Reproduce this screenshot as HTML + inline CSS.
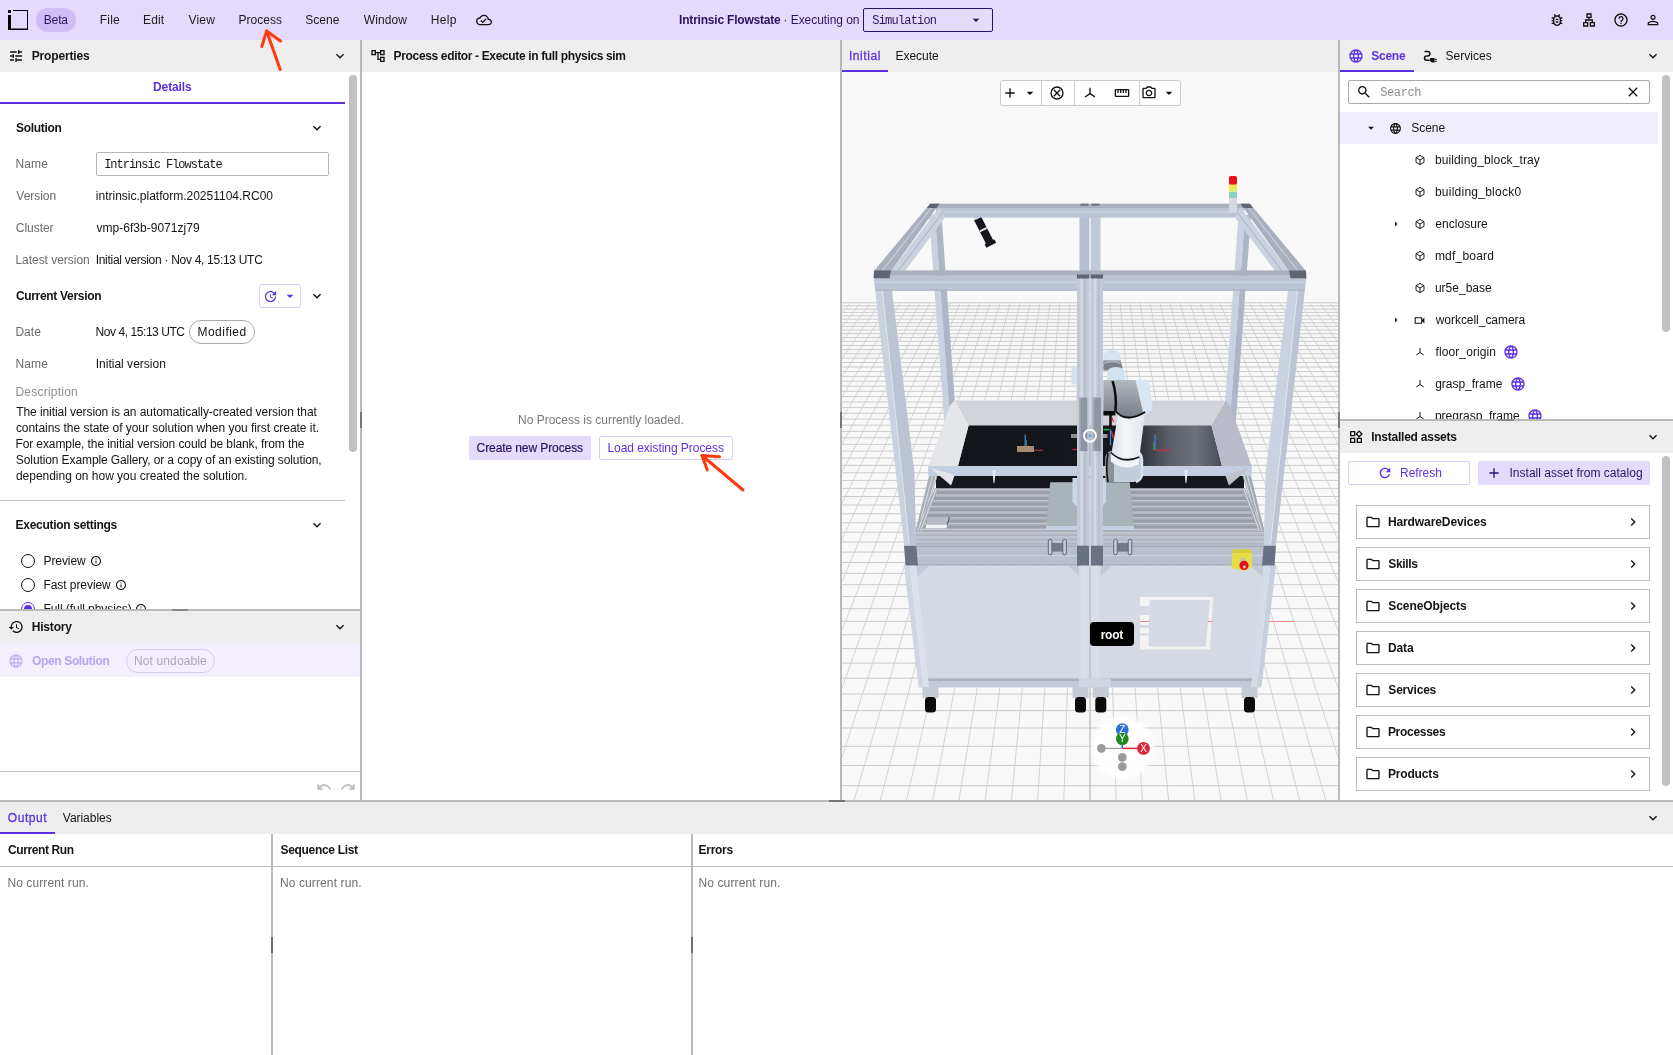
<!DOCTYPE html>
<html lang="en"><head><meta charset="utf-8"><title>Intrinsic Flowstate</title><style>html,body{margin:0;padding:0}
body{width:1673px;height:1055px;position:relative;overflow:hidden;background:#fff;font-family:"Liberation Sans",sans-serif;font-size:12px;color:#141414}
.a{position:absolute}
.t{position:absolute;white-space:nowrap;line-height:16px}
svg{display:block;overflow:visible}
#app{position:absolute;left:0;top:0;width:1673px;height:1055px;will-change:transform}</style></head><body><div id="app">
<div class="a" style="left:0px;top:0px;width:1673px;height:40px;background:#e4dafb"></div>
<div class="a" style="left:0px;top:40px;width:1673px;height:32px;background:#eeeeee"></div>
<div class="a" style="left:360px;top:40px;width:2px;height:760px;background:#b9b9b9"></div>
<div class="a" style="left:840px;top:40px;width:2px;height:760px;background:#b9b9b9"></div>
<div class="a" style="left:1338px;top:40px;width:2px;height:760px;background:#b9b9b9"></div>
<div class="a" style="left:0px;top:800px;width:1673px;height:2px;background:#b9b9b9"></div>
<div class="a" style="left:360px;top:412px;width:2px;height:16px;background:#777"></div>
<div class="a" style="left:840px;top:412px;width:2px;height:16px;background:#777"></div>
<div class="a" style="left:1338px;top:412px;width:2px;height:16px;background:#777"></div>
<svg class="a" style="left:8px;top:10px" width="21" height="21" viewBox="0 0 21 21"><rect x="0" y="0" width="3" height="3" fill="#000"/><path d="M0 5h3v13.500h16V1H5V0h15v20H0z" fill="#000"/></svg>
<div class="a" style="left:36px;top:8px;width:40px;height:24px;background:#cfbef6;border-radius:12px"></div>
<div class="t" style="left:43.70px;top:12.0px;letter-spacing:-0.117px;color:#2a1363;">Beta</div>
<div class="t" style="left:99.70px;top:12.0px;letter-spacing:0.233px;color:#1c1c1c;">File</div>
<div class="t" style="left:143.00px;top:12.0px;letter-spacing:0.167px;color:#1c1c1c;">Edit</div>
<div class="t" style="left:188.55px;top:12.0px;letter-spacing:0.167px;color:#1c1c1c;">View</div>
<div class="t" style="left:238.40px;top:12.0px;letter-spacing:0.033px;color:#1c1c1c;">Process</div>
<div class="t" style="left:305.15px;top:12.0px;letter-spacing:0.088px;color:#1c1c1c;">Scene</div>
<div class="t" style="left:363.75px;top:12.0px;letter-spacing:0.110px;color:#1c1c1c;">Window</div>
<div class="t" style="left:430.80px;top:12.0px;letter-spacing:0.350px;color:#1c1c1c;">Help</div>
<svg class="a" style="left:476.00px;top:12.00px;" width="16" height="16" viewBox="0 0 24 24"><path d="M19.35 10.04C18.67 6.59 15.64 4 12 4 9.11 4 6.6 5.64 5.35 8.04 2.34 8.36 0 10.91 0 14c0 3.31 2.69 6 6 6h13c2.76 0 5-2.24 5-5 0-2.64-2.05-4.78-4.65-4.96zM19 18H6c-2.21 0-4-1.79-4-4 0-2.05 1.53-3.76 3.56-3.97l1.07-.11.5-.95C8.08 7.14 9.94 6 12 6c2.62 0 4.88 1.86 5.39 4.43l.3 1.5 1.53.11c1.56.1 2.78 1.41 2.78 2.96 0 1.65-1.35 3-3 3zm-9-3.82l-2.09-2.09L6.5 13.5 10 17l6.01-6.01-1.41-1.41z" fill="#111"/></svg>
<div class="t" style="left:679.10px;top:12.0px;letter-spacing:-0.208px;font-weight:700;color:#2a1363;">Intrinsic Flowstate</div>
<div class="t" style="left:783.50px;top:12.0px;letter-spacing:-0.058px;color:#2a1363;">· Executing on</div>
<div class="a" style="left:863px;top:8px;width:130px;height:24px;border:1px solid #2a1363;border-radius:2px;box-sizing:border-box"></div>
<div class="t" style="left:872.30px;top:13.0px;letter-spacing:-0.806px;font-family:'Liberation Mono',monospace;color:#2a1363;">Simulation</div>
<svg class="a" style="left:968.30px;top:12.30px;" width="16" height="16" viewBox="0 0 24 24"><path d="M7 10l5 5 5-5z" fill="#2a1363"/></svg>
<svg class="a" style="left:1549.00px;top:12.00px;" width="16" height="16" viewBox="0 0 24 24"><path d="M20 8h-2.81c-.45-.78-1.07-1.45-1.82-1.96L17 4.41 15.59 3l-2.17 2.17C12.96 5.06 12.49 5 12 5s-.96.06-1.41.17L8.41 3 7 4.41l1.62 1.63C7.88 6.55 7.26 7.22 6.81 8H4v2h2.09c-.05.33-.09.66-.09 1v1H4v2h2v1c0 .34.04.67.09 1H4v2h2.81c1.04 1.79 2.97 3 5.19 3s4.15-1.21 5.19-3H20v-2h-2.09c.05-.33.09-.66.09-1v-1h2v-2h-2v-1c0-.34-.04-.67-.09-1H20V8zm-4 4v3c0 .22-.03.47-.07.7l-.1.65-.37.65c-.72 1.24-2.04 2-3.46 2s-2.74-.77-3.46-2l-.37-.64-.1-.65C8.03 15.48 8 15.23 8 15v-4c0-.23.03-.48.07-.7l.1-.65.37-.65c.3-.52.72-.97 1.21-1.31l.57-.39.74-.18c.31-.08.63-.12.94-.12.32 0 .63.04.95.12l.68.16.61.42c.5.34.91.78 1.21 1.31l.38.65.1.65c.04.22.07.47.07.69v1zm-6 2h4v2h-4zm0-4h4v2h-4z" fill="#111"/></svg>
<svg class="a" style="left:1581.00px;top:12.00px;" width="16" height="16" viewBox="0 0 24 24"><path d="M13 22h8v-7h-3v-4h-5V9h3V2H8v7h3v2H6v4H3v7h8v-7H8v-2h8v2h-3v7zM10 7V4h4v3h-4zM9 17v3H5v-3h4zm10 0v3h-4v-3h4z" fill="#111"/></svg>
<svg class="a" style="left:1613.00px;top:12.00px;" width="16" height="16" viewBox="0 0 24 24"><path d="M11 18h2v-2h-2v2zm1-16C6.48 2 2 6.48 2 12s4.48 10 10 10 10-4.48 10-10S17.52 2 12 2zm0 18c-4.41 0-8-3.59-8-8s3.59-8 8-8 8 3.59 8 8-3.59 8-8 8zm0-14c-2.21 0-4 1.79-4 4h2c0-1.1.9-2 2-2s2 .9 2 2c0 2-3 1.75-3 5h2c0-2.25 3-2.5 3-5 0-2.21-1.79-4-4-4z" fill="#111"/></svg>
<svg class="a" style="left:1645.00px;top:12.00px;" width="16" height="16" viewBox="0 0 24 24"><path d="M12 5.9c1.16 0 2.1.94 2.1 2.1s-.94 2.1-2.1 2.1S9.9 9.16 9.9 8s.94-2.1 2.1-2.1m0 9c2.97 0 6.1 1.46 6.1 2.1v1.1H5.9V17c0-.64 3.13-2.1 6.1-2.1M12 4C9.79 4 8 5.79 8 8s1.79 4 4 4 4-1.79 4-4-1.79-4-4-4zm0 9c-2.67 0-8 1.34-8 4v3h16v-3c0-2.66-5.33-4-8-4z" fill="#111"/></svg>
<svg class="a" style="left:8.00px;top:48.00px;" width="16" height="16" viewBox="0 0 24 24"><path d="M3 17v2h6v-2H3zM3 5v2h10V5H3zm10 16v-2h8v-2h-8v-2h-2v6h2zM7 9v2H3v2h4v2h2V9H7zm14 4v-2H11v2h10zm-6-4h2V7h4V5h-4V3h-2v6z" fill="#111"/></svg>
<div class="t" style="left:31.70px;top:48.0px;letter-spacing:-0.144px;font-weight:700;">Properties</div>
<svg class="a" style="left:332.00px;top:48.00px;" width="16" height="16" viewBox="0 0 24 24"><path d="M16.59 8.59L12 13.17 7.41 8.59 6 10l6 6 6-6z" fill="#111"/></svg>
<svg class="a" style="left:370.00px;top:48.00px;" width="16" height="16" viewBox="0 0 24 24"><path d="M22 11V3h-7v3H9V3H2v8h7V8h2v10h4v3h7v-8h-7v3h-2V8h2v3h7zM7 9H4V5h3v4zm10 6h3v4h-3v-4zm0-10h3v4h-3V5z" fill="#111"/></svg>
<div class="t" style="left:393.60px;top:48.0px;letter-spacing:-0.349px;font-weight:700;">Process editor - Execute in full physics sim</div>
<div class="t" style="left:848.90px;top:47.5px;letter-spacing:0.600px;color:#5c30e0;-webkit-text-stroke:0.300px #5c30e0;">Initial</div>
<div class="a" style="left:842px;top:70px;width:46px;height:2px;background:#5c30e0"></div>
<div class="t" style="left:895.40px;top:48.0px;letter-spacing:-0.008px;">Execute</div>
<svg class="a" style="left:1347.50px;top:47.50px;" width="16" height="16" viewBox="0 0 24 24"><path d="M11.99 2C6.47 2 2 6.48 2 12s4.47 10 9.99 10C17.52 22 22 17.52 22 12S17.52 2 11.99 2zm6.93 6h-2.95c-.32-1.25-.78-2.45-1.38-3.56 1.84.63 3.37 1.91 4.33 3.56zM12 4.04c.83 1.2 1.48 2.53 1.91 3.96h-3.82c.43-1.43 1.08-2.76 1.91-3.96zM4.26 14C4.1 13.36 4 12.69 4 12s.1-1.36.26-2h3.38c-.08.66-.14 1.32-.14 2 0 .68.06 1.34.14 2H4.26zm.82 2h2.95c.32 1.25.78 2.45 1.38 3.56-1.84-.63-3.37-1.9-4.33-3.56zm2.95-8H5.08c.96-1.66 2.49-2.93 4.33-3.56C8.81 5.55 8.35 6.75 8.03 8zM12 19.96c-.83-1.2-1.48-2.53-1.91-3.96h3.82c-.43 1.43-1.08 2.76-1.91 3.96zM14.34 14H9.66c-.09-.66-.16-1.32-.16-2 0-.68.07-1.35.16-2h4.68c.09.65.16 1.32.16 2 0 .68-.07 1.34-.16 2zm.25 5.56c.6-1.11 1.06-2.31 1.38-3.56h2.95c-.96 1.65-2.49 2.93-4.33 3.56zM16.36 14c.08-.66.14-1.32.14-2 0-.68-.06-1.34-.14-2h3.38c.16.64.26 1.31.26 2s-.1 1.36-.26 2h-3.38z" fill="#5c30e0"/></svg>
<div class="t" style="left:1371.35px;top:47.5px;letter-spacing:-0.275px;font-weight:700;color:#5c30e0;">Scene</div>
<div class="a" style="left:1340px;top:70px;width:73.5px;height:2px;background:#5c30e0"></div>
<svg class="a" style="left:1422px;top:48px" width="16" height="16" viewBox="0 0 16 16"><path d="M2.500 3.500h3.200a2.200 2.200 0 0 1 0 4.400h-1a2.200 2.200 0 0 0 0 4.400h3" fill="none" stroke="#111" stroke-width="1.500"/><path d="M8 10h4.500v4.500H10.500a2.500 2.500 0 0 1-2.500-2.250z" fill="#111"/><rect x="12.500" y="10.800" width="2.300" height="1.100" fill="#111"/><rect x="12.500" y="12.800" width="2.300" height="1.100" fill="#111"/></svg>
<div class="t" style="left:1445.45px;top:48.0px;letter-spacing:0.029px;">Services</div>
<svg class="a" style="left:1645.00px;top:48.00px;" width="16" height="16" viewBox="0 0 24 24"><path d="M16.59 8.59L12 13.17 7.41 8.59 6 10l6 6 6-6z" fill="#111"/></svg>
<div class="t" style="left:153.00px;top:79.0px;letter-spacing:-0.100px;font-weight:700;color:#5c30e0;">Details</div>
<div class="a" style="left:0px;top:102px;width:345px;height:2px;background:#5c30e0"></div>
<div class="a" style="left:349px;top:75px;width:8px;height:377px;background:#c1c1c1;border-radius:4px"></div>
<div class="t" style="left:16.05px;top:120.0px;letter-spacing:-0.329px;font-weight:700;">Solution</div>
<svg class="a" style="left:309.00px;top:120.00px;" width="16" height="16" viewBox="0 0 24 24"><path d="M16.59 8.59L12 13.17 7.41 8.59 6 10l6 6 6-6z" fill="#111"/></svg>
<div class="t" style="left:15.40px;top:156.0px;letter-spacing:0.133px;color:#6a6a6a;">Name</div>
<div class="t" style="left:16.35px;top:188.0px;letter-spacing:-0.033px;color:#6a6a6a;">Version</div>
<div class="t" style="left:15.80px;top:220.0px;letter-spacing:-0.033px;color:#6a6a6a;">Cluster</div>
<div class="t" style="left:15.40px;top:252.0px;letter-spacing:-0.027px;color:#6a6a6a;">Latest version</div>
<div class="a" style="left:96px;top:152px;width:233px;height:24px;border:1px solid #b5b5b5;border-radius:2px;box-sizing:border-box;background:#fff"></div>
<div class="t" style="left:104.20px;top:157.0px;letter-spacing:-1.019px;font-family:'Liberation Mono',monospace;">Intrinsic Flowstate</div>
<div class="t" style="left:95.80px;top:188.0px;">intrinsic.platform.20251104.RC00</div>
<div class="t" style="left:96.55px;top:220.0px;letter-spacing:0.019px;">vmp-6f3b-9071zj79</div>
<div class="t" style="left:95.70px;top:252.0px;letter-spacing:-0.291px;">Initial version · Nov 4, 15:13 UTC</div>
<div class="t" style="left:15.90px;top:288.0px;letter-spacing:-0.314px;font-weight:700;">Current Version</div>
<div class="a" style="left:259px;top:284px;width:42px;height:24px;border:1px solid #d6cbf7;border-radius:2px;box-sizing:border-box"></div>
<svg class="a" style="left:262.50px;top:288.50px;" width="15" height="15" viewBox="0 0 24 24"><path d="M21 10.12h-6.78l2.74-2.82c-2.73-2.7-7.15-2.8-9.88-.1-2.73 2.71-2.73 7.08 0 9.79s7.15 2.71 9.88 0C18.32 15.65 19 14.08 19 12.1h2c0 1.98-.88 4.55-2.64 6.29-3.51 3.48-9.21 3.48-12.72 0-3.5-3.47-3.53-9.11-.02-12.58s9.14-3.47 12.65 0L21 3v7.12zM12.5 8v4.25l3.5 2.08-.72 1.21L11 13V8h1.5z" fill="#5c30e0"/></svg>
<svg class="a" style="left:281.70px;top:288.30px;" width="16" height="16" viewBox="0 0 24 24"><path d="M7 10l5 5 5-5z" fill="#5c30e0"/></svg>
<svg class="a" style="left:309.00px;top:288.00px;" width="16" height="16" viewBox="0 0 24 24"><path d="M16.59 8.59L12 13.17 7.41 8.59 6 10l6 6 6-6z" fill="#111"/></svg>
<div class="t" style="left:15.40px;top:324.0px;letter-spacing:0.050px;color:#6a6a6a;">Date</div>
<div class="t" style="left:95.60px;top:324.0px;letter-spacing:-0.440px;">Nov 4, 15:13 UTC</div>
<div class="a" style="left:189px;top:320px;width:66px;height:24px;border:1px solid #a9a9a9;border-radius:12px;box-sizing:border-box"></div>
<div class="t" style="left:197.50px;top:324.0px;letter-spacing:0.471px;">Modified</div>
<div class="t" style="left:15.40px;top:356.0px;letter-spacing:0.133px;color:#6a6a6a;">Name</div>
<div class="t" style="left:95.70px;top:356.0px;letter-spacing:0.011px;">Initial version</div>
<div class="t" style="left:15.40px;top:384.0px;letter-spacing:0.235px;color:#8c8c8c;">Description</div>
<div class="t" style="left:16.15px;top:404.0px;letter-spacing:-0.069px;">The initial version is an automatically-created version that</div>
<div class="t" style="left:15.90px;top:420.0px;letter-spacing:-0.039px;">contains the state of your solution when you first create it.</div>
<div class="t" style="left:15.40px;top:436.0px;letter-spacing:-0.092px;">For example, the initial version could be blank, from the</div>
<div class="t" style="left:15.85px;top:452.0px;letter-spacing:-0.103px;">Solution Example Gallery, or a copy of an existing solution,</div>
<div class="t" style="left:15.90px;top:468.0px;letter-spacing:-0.012px;">depending on how you created the solution.</div>
<div class="a" style="left:0px;top:500px;width:345px;height:1px;background:#bdbdbd"></div>
<div class="t" style="left:15.60px;top:517.0px;letter-spacing:-0.300px;font-weight:700;">Execution settings</div>
<svg class="a" style="left:309.00px;top:517.00px;" width="16" height="16" viewBox="0 0 24 24"><path d="M16.59 8.59L12 13.17 7.41 8.59 6 10l6 6 6-6z" fill="#111"/></svg>
<div class="a" style="left:21px;top:554px;width:14px;height:14px;border:1px solid #111;border-radius:50%;box-sizing:border-box"></div>
<div class="a" style="left:21px;top:578px;width:14px;height:14px;border:1px solid #111;border-radius:50%;box-sizing:border-box"></div>
<div class="t" style="left:43.50px;top:553.0px;letter-spacing:-0.083px;">Preview</div>
<svg class="a" style="left:90.20px;top:555.00px;" width="12" height="12" viewBox="0 0 24 24"><path d="M11 7h2v2h-2zm0 4h2v6h-2zm1-9C6.48 2 2 6.48 2 12s4.48 10 10 10 10-4.48 10-10S17.52 2 12 2zm0 18c-4.41 0-8-3.59-8-8s3.59-8 8-8 8 3.59 8 8-3.59 8-8 8z" fill="#111"/></svg>
<div class="t" style="left:43.50px;top:577.0px;letter-spacing:-0.068px;">Fast preview</div>
<svg class="a" style="left:114.60px;top:579.00px;" width="12" height="12" viewBox="0 0 24 24"><path d="M11 7h2v2h-2zm0 4h2v6h-2zm1-9C6.48 2 2 6.48 2 12s4.48 10 10 10 10-4.48 10-10S17.52 2 12 2zm0 18c-4.41 0-8-3.59-8-8s3.59-8 8-8 8 3.59 8 8-3.59 8-8 8z" fill="#111"/></svg>
<div class="a" style="left:0;top:598px;width:345px;height:11px;overflow:hidden">
<div class="a" style="left:21px;top:4px;width:14px;height:14px;border:1px solid #5c30e0;border-radius:50%;box-sizing:border-box"></div>
<div class="a" style="left:24px;top:7px;width:8px;height:8px;background:#5c30e0;border-radius:50%"></div>
<div class="t" style="left:43.50px;top:3.0px;letter-spacing:-0.067px;">Full (full physics)</div>
<svg class="a" style="left:134.70px;top:5.00px;" width="12" height="12" viewBox="0 0 24 24"><path d="M11 7h2v2h-2zm0 4h2v6h-2zm1-9C6.48 2 2 6.48 2 12s4.48 10 10 10 10-4.48 10-10S17.52 2 12 2zm0 18c-4.41 0-8-3.59-8-8s3.59-8 8-8 8 3.59 8 8-3.59 8-8 8z" fill="#111"/></svg>
</div>
<div class="a" style="left:0px;top:609px;width:360px;height:2px;background:#b9b9b9"></div>
<div class="a" style="left:172px;top:609px;width:16px;height:2px;background:#8a8a8a"></div>
<div class="a" style="left:0px;top:611px;width:360px;height:32px;background:#eeeeee"></div>
<svg class="a" style="left:8.00px;top:619.00px;" width="16" height="16" viewBox="0 0 24 24"><path d="M13 3c-4.97 0-9 4.03-9 9H1l3.89 3.89.07.14L9 12H6c0-3.87 3.13-7 7-7s7 3.13 7 7-3.13 7-7 7c-1.93 0-3.68-.79-4.94-2.06l-1.42 1.42C8.27 19.99 10.51 21 13 21c4.97 0 9-4.03 9-9s-4.03-9-9-9zm-1 5v5l4.28 2.54.72-1.21-3.5-2.08V8H12z" fill="#111"/></svg>
<div class="t" style="left:31.70px;top:619.0px;letter-spacing:-0.175px;font-weight:700;">History</div>
<svg class="a" style="left:332.00px;top:619.00px;" width="16" height="16" viewBox="0 0 24 24"><path d="M16.59 8.59L12 13.17 7.41 8.59 6 10l6 6 6-6z" fill="#111"/></svg>
<div class="a" style="left:0px;top:643px;width:360px;height:34px;background:#f3effe"></div>
<svg class="a" style="left:8.00px;top:652.50px;" width="16" height="16" viewBox="0 0 24 24"><path d="M11.99 2C6.47 2 2 6.48 2 12s4.47 10 9.99 10C17.52 22 22 17.52 22 12S17.52 2 11.99 2zm6.93 6h-2.95c-.32-1.25-.78-2.45-1.38-3.56 1.84.63 3.37 1.91 4.33 3.56zM12 4.04c.83 1.2 1.48 2.53 1.91 3.96h-3.82c.43-1.43 1.08-2.76 1.91-3.96zM4.26 14C4.1 13.36 4 12.69 4 12s.1-1.36.26-2h3.38c-.08.66-.14 1.32-.14 2 0 .68.06 1.34.14 2H4.26zm.82 2h2.95c.32 1.25.78 2.45 1.38 3.56-1.84-.63-3.37-1.9-4.33-3.56zm2.95-8H5.08c.96-1.66 2.49-2.93 4.33-3.56C8.81 5.55 8.35 6.75 8.03 8zM12 19.96c-.83-1.2-1.48-2.53-1.91-3.96h3.82c-.43 1.43-1.08 2.76-1.91 3.96zM14.34 14H9.66c-.09-.66-.16-1.32-.16-2 0-.68.07-1.35.16-2h4.68c.09.65.16 1.32.16 2 0 .68-.07 1.34-.16 2zm.25 5.56c.6-1.11 1.06-2.31 1.38-3.56h2.95c-.96 1.65-2.49 2.93-4.33 3.56zM16.36 14c.08-.66.14-1.32.14-2 0-.68-.06-1.34-.14-2h3.38c.16.64.26 1.31.26 2s-.1 1.36-.26 2h-3.38z" fill="#c3b2f3"/></svg>
<div class="t" style="left:32.00px;top:652.5px;letter-spacing:-0.354px;font-weight:700;color:#b7a3f1;">Open Solution</div>
<div class="a" style="left:126px;top:649px;width:89px;height:24px;border:1px solid #d6cbf7;border-radius:12px;box-sizing:border-box"></div>
<div class="t" style="left:134.00px;top:653.0px;letter-spacing:0.123px;color:#aca6b8;">Not undoable</div>
<div class="a" style="left:0px;top:771px;width:360px;height:1px;background:#bdbdbd"></div>
<svg class="a" style="left:315.80px;top:779.00px;" width="16" height="16" viewBox="0 0 24 24"><path d="M12.5 8c-2.65 0-5.05.99-6.9 2.6L2 7v9h9l-3.62-3.62c1.39-1.16 3.16-1.88 5.12-1.88 3.54 0 6.55 2.31 7.6 5.5l2.37-.78C21.08 11.03 17.15 8 12.5 8z" fill="#bdbdbd"/></svg>
<svg class="a" style="left:339.80px;top:779.00px;" width="16" height="16" viewBox="0 0 24 24"><path d="M18.4 10.6C16.55 8.99 14.15 8 11.5 8c-4.65 0-8.58 3.03-9.96 7.22L3.9 16c1.05-3.19 4.05-5.5 7.6-5.5 1.95 0 3.73.72 5.12 1.88L13 16h9V7l-3.6 3.6z" fill="#bdbdbd"/></svg>
<div class="t" style="left:518.00px;top:412.0px;letter-spacing:-0.007px;color:#777;">No Process is currently loaded.</div>
<div class="a" style="left:469px;top:436px;width:122px;height:24px;background:#e4dafb;border-radius:2px"></div>
<div class="t" style="left:476.60px;top:440.0px;letter-spacing:-0.094px;color:#2a1363;-webkit-text-stroke:0.200px #2a1363;">Create new Process</div>
<div class="a" style="left:599px;top:436px;width:134px;height:24px;border:1px solid #d6cbf7;border-radius:2px;box-sizing:border-box"></div>
<div class="t" style="left:607.40px;top:440.0px;letter-spacing:-0.042px;color:#5c30e0;">Load existing Process</div>
<svg class="a" style="left:842px;top:72px;overflow:hidden" width="496" height="728" viewBox="842 72 496 728"><defs><linearGradient id="gfl" x1="0" x2="1" y1="0" y2="0"><stop offset="0" stop-color="#14151a"/><stop offset="0.62" stop-color="#16171c"/><stop offset="0.800" stop-color="#5a5f68"/><stop offset="0.900" stop-color="#6d727a"/><stop offset="1" stop-color="#4a4f57"/></linearGradient><linearGradient id="gj" x1="0" x2="0" y1="0" y2="1"><stop offset="0" stop-color="#b3b7be"/><stop offset="1" stop-color="#777c85"/></linearGradient><linearGradient id="garm" x1="0" x2="1" y1="0" y2="0"><stop offset="0" stop-color="#d9dde4"/><stop offset="0.400" stop-color="#f4f6f9"/><stop offset="1" stop-color="#dfe6ee"/></linearGradient><radialGradient id="ggz"><stop offset="0.820" stop-color="#fff" stop-opacity="0.970"/><stop offset="1" stop-color="#fff" stop-opacity="0"/></radialGradient></defs><rect x="842.0" y="72.0" width="496.0" height="728.0" fill="#f8f8f8" /><path d="M842 302.8H1338M842 305.9H1338M842 309.1H1338M842 312.4H1338M842 315.8H1338M842 319.2H1338M842 322.7H1338M842 326.3H1338M842 330.0H1338M842 333.7H1338M842 337.5H1338M842 341.4H1338M842 345.5H1338M842 349.6H1338M842 353.8H1338M842 358.1H1338M842 362.5H1338M842 367.0H1338M842 371.6H1338M842 376.4H1338M842 381.2H1338M842 386.2H1338M842 391.3H1338M842 396.6H1338M842 402.0H1338M842 407.6H1338M842 413.3H1338M842 419.1H1338M842 425.2H1338M842 431.4H1338M842 437.8H1338M842 444.3H1338M842 451.1H1338M842 458.1H1338M842 465.3H1338M842 472.8H1338M842 480.4H1338M842 488.4H1338M842 496.5H1338M842 505.0H1338M842 513.8H1338M842 522.8H1338M842 532.2H1338M842 542.0H1338M842 552.1H1338M842 562.5H1338M842 573.4H1338M842 584.7H1338M842 596.5H1338M842 608.7H1338M842 621.4H1338M842 634.7H1338M842 648.6H1338M842 663.1H1338M842 678.2H1338M842 694.0H1338M842 710.6H1338M842 728.0H1338M842 746.3H1338M842 765.5H1338M842 785.7H1338" fill="none" stroke="#cbcbcb" stroke-width="1"/><path d="M840.3 302.800L435.0 800M850.3 302.800L461.2 800M860.3 302.800L487.4 800M870.3 302.800L513.6 800M880.3 302.800L539.8 800M890.3 302.800L566.0 800M900.3 302.800L592.2 800M910.2 302.800L618.4 800M920.2 302.800L644.6 800M930.2 302.800L670.8 800M940.2 302.800L697.0 800M950.2 302.800L723.2 800M960.2 302.800L749.4 800M970.2 302.800L775.6 800M980.1 302.800L801.8 800M990.1 302.800L828.0 800M1000.1 302.800L854.2 800M1010.1 302.800L880.4 800M1020.1 302.800L906.6 800M1030.1 302.800L932.8 800M1040.1 302.800L959.0 800M1050.1 302.800L985.2 800M1060.0 302.800L1011.4 800M1070.0 302.800L1037.6 800M1080.0 302.800L1063.8 800M1100.0 302.800L1116.2 800M1110.0 302.800L1142.4 800M1120.0 302.800L1168.6 800M1129.9 302.800L1194.8 800M1139.9 302.800L1221.0 800M1149.9 302.800L1247.2 800M1159.9 302.800L1273.4 800M1169.9 302.800L1299.6 800M1179.9 302.800L1325.8 800M1189.9 302.800L1352.0 800M1199.9 302.800L1378.2 800M1209.8 302.800L1404.4 800M1219.8 302.800L1430.6 800M1229.8 302.800L1456.8 800M1239.8 302.800L1483.0 800M1249.8 302.800L1509.2 800M1259.8 302.800L1535.4 800M1269.8 302.800L1561.6 800M1279.7 302.800L1587.8 800M1289.7 302.800L1614.0 800M1299.7 302.800L1640.2 800M1309.7 302.800L1666.4 800M1319.7 302.800L1692.6 800M1329.7 302.800L1718.8 800M1339.7 302.800L1745.0 800" fill="none" stroke="#d0d0d0" stroke-width="0.900"/><path d="M1090 302.800V800" stroke="#c2c2c2" stroke-width="1.500"/><path d="M1140 621.500H1294" stroke="#f08a8a" stroke-width="1"/><rect x="1079.5" y="215.0" width="10.0" height="58.0" fill="#b7becd" /><rect x="1089.5" y="215.0" width="1.5" height="58.0" fill="#e4e8ef" /><rect x="1091.0" y="215.0" width="9.5" height="58.0" fill="#c1c8d6" /><polygon points="929.0,215.0 935.0,215.0 950.7,428.0 944.7,428.0" fill="#cbd2df" /><polygon points="935.0,215.0 941.5,215.0 956.7,428.0 950.7,428.0" fill="#aeb5c4" /><polygon points="1251.0,215.0 1245.0,215.0 1229.3,428.0 1235.3,428.0" fill="#aeb5c4" /><polygon points="1245.0,215.0 1238.5,215.0 1223.3,428.0 1229.3,428.0" fill="#cbd2df" /><g transform="rotate(-27 984 231)"><rect x="980" y="217" width="8" height="27" fill="#15161b"/><rect x="978.500" y="243" width="11" height="4" fill="#15161b"/><rect x="980" y="228.500" width="8" height="2" fill="#dfe3ea"/><rect x="981.500" y="213.500" width="5" height="4" fill="#c9ced8"/></g><rect x="934.0" y="203.7" width="312.0" height="4.3" fill="#a9afbc" /><rect x="936.0" y="208.0" width="308.0" height="9.6" fill="#bcc3d2" /><rect x="936.0" y="211.5" width="308.0" height="1.0" fill="#cfd5e1" /><rect x="1229.0" y="198.0" width="8.0" height="14.5" fill="#d3d8e1" /><rect x="1229.0" y="191.5" width="8.0" height="6.5" fill="#8fd1c0" /><rect x="1229.0" y="184.0" width="8.0" height="7.5" fill="#ece85a" /><rect x="1229.0" y="176.0" width="8.0" height="8.5" fill="#e8101a" rx="1.500"/><polygon points="939.5,207.0 945.0,217.6 905.0,271.0 891.0,271.0" fill="#cbd2df" /><polygon points="930.0,203.7 939.5,203.7 891.0,271.0 874.0,271.0" fill="#a9afbc" /><polygon points="1240.5,207.0 1235.0,217.6 1275.0,271.0 1289.0,271.0" fill="#cbd2df" /><polygon points="1250.0,203.7 1240.5,203.7 1289.0,271.0 1306.0,271.0" fill="#a9afbc" /><path d="M934.500 204L882 271M1245.500 204L1298 271" stroke="#c9cfdb" stroke-width="1.200" fill="none"/><path d="M943 212L898 271M1237 212L1282 271" stroke="#aab1c0" stroke-width="1" fill="none"/><polygon points="930.0,203.7 939.5,203.7 936.5,208.0 927.0,208.0" fill="#5f6470" /><polygon points="1250.0,203.7 1240.5,203.7 1243.5,208.0 1253.0,208.0" fill="#5f6470" /><rect x="1080.5" y="203.7" width="8.0" height="2.0" fill="#6d7380" /><rect x="1091.5" y="203.7" width="8.0" height="2.0" fill="#6d7380" /><polygon points="955.0,400.4 1225.0,400.4 1211.5,425.5 968.5,425.5" fill="#d2d4da" /><polygon points="968.5,425.5 1211.5,425.5 1222.0,466.0 958.0,466.0" fill="url(#gfl)" /><polygon points="950.0,405.5 954.3,400.4 968.6,425.5 958.0,466.0 928.2,466.6" fill="#e5e6e9" /><polygon points="1230.0,405.5 1225.7,400.4 1211.4,425.5 1222.0,466.0 1251.8,466.6" fill="#babbc8" /><rect x="936.0" y="476.0" width="308.0" height="12.5" fill="#17181d" /><polygon points="929.5,474.0 938.0,474.0 921.5,531.0 915.5,531.0" fill="#a9adb6" /><polygon points="1250.5,474.0 1242.0,474.0 1258.5,531.0 1264.5,531.0" fill="#a4a8b2" /><path d="M932.500 476L917.800 531M936 476L920.500 531M1247.500 476L1262.200 531M1244 476L1259.500 531" stroke="#e2e5ea" stroke-width="0.900" fill="none"/><rect x="928.2" y="466.0" width="323.6" height="10.0" fill="#c3cee3" /><polygon points="930.2,467.7 954.7,475.0 951.1,485.4" fill="#e3e5e9" /><polygon points="1249.8,467.7 1225.3,475.0 1228.9,485.4" fill="#bfc1cd" /><polygon points="992.5,470.0 995.5,470.0 994.5,483.0 993.5,483.0" fill="#e9edf3" /><polygon points="1187.5,470.0 1184.5,470.0 1185.5,483.0 1186.5,483.0" fill="#e9edf3" /><rect x="1017.0" y="446.0" width="17.0" height="6.0" fill="#a48d72" /><path d="M1025.200 434.500V446" stroke="#3b82e6" stroke-width="1.300"/><path d="M1026.300 440V446" stroke="#2faa3a" stroke-width="1"/><path d="M1034 450.300H1043" stroke="#b0303a" stroke-width="1.200"/><path d="M1155 434.500V450" stroke="#3b82e6" stroke-width="1.300"/><path d="M1153.800 442V450" stroke="#2faa3a" stroke-width="1"/><path d="M1155 450.200H1171" stroke="#c03040" stroke-width="1.300"/><rect x="1071.0" y="434.0" width="6.0" height="4.0" fill="#8d8d8d" /><path d="M1072.500 449.500H1077" stroke="#b0303a" stroke-width="1.200"/><clipPath id="ctab"><polygon points="935.300,488.400 1244.700,488.400 1264.500,531 1264.500,546 915.500,546 915.500,531"/></clipPath><g clip-path="url(#ctab)"><rect x="900.0" y="488.0" width="380.0" height="43.0" fill="#9a9ea7" /><rect x="900.0" y="488.6" width="380.0" height="1.5" fill="#c3c7cf" /><rect x="900.0" y="490.1" width="380.0" height="1.2" fill="#adb1ba" /><rect x="900.0" y="494.3" width="380.0" height="1.5" fill="#c3c7cf" /><rect x="900.0" y="495.8" width="380.0" height="1.2" fill="#adb1ba" /><rect x="900.0" y="500.0" width="380.0" height="1.5" fill="#c3c7cf" /><rect x="900.0" y="501.5" width="380.0" height="1.2" fill="#adb1ba" /><rect x="900.0" y="505.7" width="380.0" height="1.5" fill="#c3c7cf" /><rect x="900.0" y="507.2" width="380.0" height="1.2" fill="#adb1ba" /><rect x="900.0" y="511.4" width="380.0" height="1.5" fill="#c3c7cf" /><rect x="900.0" y="512.9" width="380.0" height="1.2" fill="#adb1ba" /><rect x="900.0" y="517.1" width="380.0" height="1.5" fill="#c3c7cf" /><rect x="900.0" y="518.6" width="380.0" height="1.2" fill="#adb1ba" /><rect x="900.0" y="522.8" width="380.0" height="1.5" fill="#c3c7cf" /><rect x="900.0" y="524.3" width="380.0" height="1.2" fill="#adb1ba" /><rect x="900.0" y="528.5" width="380.0" height="1.5" fill="#c3c7cf" /><rect x="900.0" y="530.0" width="380.0" height="1.2" fill="#adb1ba" /><rect x="900.0" y="531.0" width="380.0" height="15.0" fill="#b9bdc8" /><rect x="900.0" y="531.0" width="380.0" height="1.1" fill="#a9adb8" /><rect x="900.0" y="532.1" width="380.0" height="1.0" fill="#c9cdd6" /><rect x="900.0" y="535.3" width="380.0" height="1.1" fill="#a9adb8" /><rect x="900.0" y="536.4" width="380.0" height="1.0" fill="#c9cdd6" /><rect x="900.0" y="539.6" width="380.0" height="1.1" fill="#a9adb8" /><rect x="900.0" y="540.7" width="380.0" height="1.0" fill="#c9cdd6" /><rect x="900.0" y="543.6" width="380.0" height="1.1" fill="#a9adb8" /><rect x="900.0" y="544.7" width="380.0" height="1.0" fill="#c9cdd6" /><polygon points="930.1,488.4 938.5,488.4 921.5,531.0 915.5,531.0" fill="#a9adb6" /><polygon points="1249.9,488.4 1241.5,488.4 1258.5,531.0 1264.5,531.0" fill="#a4a8b2" /><path d="M933 488.400L917.800 531M936.500 488.400L920.500 531M1247 488.400L1262.200 531M1243.500 488.400L1259.500 531" stroke="#e2e5ea" stroke-width="0.900" fill="none"/></g><polygon points="925.6,528.3 927.6,516.9 949.5,516.9 946.2,528.3" fill="#b5bac5" /><polygon points="925.6,528.3 926.3,524.8 947.2,524.8 946.2,528.3" fill="#f2f3f6" /><path d="M949.500 516.900L947.200 524.800" stroke="#3a3d45" stroke-width="0.800"/><polygon points="1050.2,482.2 1129.8,482.2 1133.8,526.0 1046.2,526.0" fill="#aab3ba" /><rect x="1046.2" y="526.0" width="87.6" height="4.0" fill="#c4d0e1" /><path d="M1072.500 478h33.500v24q-4 7-16.750 7t-16.750-7z" fill="#c9d8e8"/><rect x="1071.400" y="366.300" width="6" height="18.500" rx="3" fill="#d3e2f1"/><path d="M1103.400 362v-6q1-6 8.500-6t8.600 6v6z" fill="#d6e4f1"/><path d="M1103.400 360.500h17.100q2 5 2 10h-19.100z" fill="#7d828a"/><path d="M1104 363q8-3 16.500 0" fill="none" stroke="#a9adb4" stroke-width="2"/><path d="M1107 374q0-7 9-7t9.400 7v7h-18.400z" fill="#d3e2f0"/><path d="M1105.500 457q1-5 6-6h24q6 2 6.300 8v16q-1 6-8 7h-28.300z" fill="#c3ceda"/><path d="M1105.500 457q1-5 6-6h2.500v31h-8.500z" fill="#8b9098"/><path d="M1136 451q6 2 6 9v15q-1 5-6 7" fill="none" stroke="#d3e3f2" stroke-width="2.500"/><path d="M1108 453q-2.500 14 0 29" fill="none" stroke="#111" stroke-width="1.600"/><path d="M1103.400 411h12v4.500h-12z" fill="#0c0c0c"/><path d="M1110.500 415v12" stroke="#111" stroke-width="2.600"/><path d="M1112 417.500l1.500 4.500M1111.300 431l2.200 7.500" stroke="#e03040" stroke-width="1.300"/><path d="M1103.400 429.600h6" stroke="#2faa3a" stroke-width="1.600"/><path d="M1110.500 429.600v15.700" stroke="#3b82e6" stroke-width="1.300"/><rect x="1102.8" y="434.0" width="4.7" height="4.0" fill="#9a9a9a" /><polygon points="1118.3,413.0 1145.3,411.0 1139.0,460.0 1111.0,456.0" fill="url(#garm)" /><path d="M1110.800 452q12 12 28.500 4.500l-.3 8q-15 7-28.200-3z" fill="#f1f4f8"/><path d="M1110.800 452.500q12 12 28.500 4.500" fill="none" stroke="#111" stroke-width="1.500"/><path d="M1103.400 380h38l7 27q-6 10-18 11.500q-10 1-16-7.500h-11z" fill="url(#gj)"/><path d="M1135.400 380h10q4 1 5 7l2 21q-1 5-8.500 7.500z" fill="#d8e6f4"/><path d="M1112.600 381q4.500 15 2.800 30" fill="none" stroke="#111" stroke-width="2.600"/><path d="M1115.400 411q11 12.500 29.800 1" fill="none" stroke="#111" stroke-width="1.800"/><rect x="915.0" y="545.7" width="350.0" height="20.0" fill="#b9bfcc" /><rect x="915.0" y="545.7" width="350.0" height="1.2" fill="#a4aab7" /><rect x="915.0" y="555.0" width="350.0" height="1.3" fill="#ccd1dc" /><rect x="915.0" y="564.2" width="350.0" height="1.3" fill="#a9afbc" /><polygon points="915.0,566.0 1265.0,566.0 1253.0,678.5 927.0,678.5" fill="#d5d9e3" /><polygon points="916.0,566.0 929.0,566.0 917.5,577.0" fill="#c3c9d6" /><polygon points="1264.0,566.0 1251.0,566.0 1262.5,577.0" fill="#c3c9d6" /><polygon points="1079.5,566.0 1068.0,566.0 1079.5,576.0" fill="#c3c9d6" /><polygon points="1100.5,566.0 1112.0,566.0 1100.5,576.0" fill="#c3c9d6" /><rect x="919.0" y="678.5" width="342.0" height="9.0" fill="#c3c9d6" /><rect x="919.0" y="678.5" width="342.0" height="2.5" fill="#aab0bd" /><polygon points="1140.0,597.0 1213.0,597.0 1210.0,649.5 1140.0,649.5" fill="#f4f3f1" /><polygon points="1149.5,600.0 1210.0,600.0 1206.0,646.5 1148.5,646.5" fill="#d5d9e3" /><rect x="1139.0" y="606.0" width="10.0" height="9.0" fill="#d5d9e3" /><rect x="1139.0" y="625.0" width="10.0" height="3.0" fill="#d5d9e3" /><rect x="1139.0" y="633.5" width="10.0" height="2.0" fill="#d5d9e3" /><path d="M1140 621.500H1149.500M1208 621.500H1212.500" stroke="#f08a8a" stroke-width="1"/><polygon points="904.0,565.5 910.0,565.5 923.0,687.0 918.5,687.0" fill="#cfd6e2" /><polygon points="910.0,565.5 916.3,565.5 929.0,687.0 923.0,687.0" fill="#dbe0ea" /><polygon points="1276.0,565.5 1270.0,565.5 1257.0,687.0 1261.5,687.0" fill="#c9d0dd" /><polygon points="1270.0,565.5 1263.7,565.5 1251.0,687.0 1257.0,687.0" fill="#d6dce7" /><rect x="1051.4" y="543.0" width="12.0" height="8.6" fill="#757a85" /><rect x="1048.3" y="539.300" width="3.600" height="15.600" rx="1.800" fill="#c5cad6" stroke="#5a6173" stroke-width="0.900"/><rect x="1062.8" y="539.300" width="3.600" height="15.600" rx="1.800" fill="#c5cad6" stroke="#5a6173" stroke-width="0.900"/><rect x="1116.8" y="543.0" width="12.0" height="8.6" fill="#757a85" /><rect x="1113.7" y="539.300" width="3.600" height="15.600" rx="1.800" fill="#c5cad6" stroke="#5a6173" stroke-width="0.900"/><rect x="1128.2" y="539.300" width="3.600" height="15.600" rx="1.800" fill="#c5cad6" stroke="#5a6173" stroke-width="0.900"/><polygon points="1232.5,549.5 1251.5,549.5 1252.0,567.0 1245.0,571.0 1231.5,568.0" fill="#e6de45" /><rect x="1233.0" y="549.5" width="18.5" height="3.5" fill="#d3cb3a" /><circle cx="1243" cy="561" r="3" fill="#bfc3b0"/><circle cx="1244" cy="565.400" r="4.600" fill="#e20f1c"/><circle cx="1244.300" cy="567" r="1.400" fill="#f4c9cc"/><polygon points="873.6,277.0 881.0,277.0 909.5,545.7 904.2,545.7" fill="#cbd2df" /><polygon points="881.0,277.0 890.3,277.0 914.2,470.0 916.3,545.7 909.5,545.7" fill="#bcc3d2" /><polygon points="1306.4,277.0 1299.0,277.0 1270.5,545.7 1275.8,545.7" fill="#bcc3d2" /><polygon points="1299.0,277.0 1289.7,277.0 1265.8,470.0 1263.7,545.7 1270.5,545.7" fill="#cbd2df" /><path d="M881 277L909.500 545.700M1299 277L1270.500 545.700" stroke="#dfe4ec" stroke-width="1" fill="none"/><polygon points="904.0,545.7 916.3,545.7 918.0,565.5 905.5,565.5" fill="#6a7183" /><polygon points="1276.0,545.7 1263.7,545.7 1262.0,565.5 1274.5,565.5" fill="#6a7183" /><rect x="874.0" y="270.4" width="432.0" height="5.4" fill="#a9afbc" /><rect x="875.0" y="275.8" width="430.0" height="14.8" fill="#bcc3d2" /><rect x="875.0" y="281.5" width="430.0" height="1.2" fill="#cfd5e1" /><rect x="876.0" y="289.6" width="428.0" height="1.0" fill="#aab1c0" /><polygon points="874.0,270.4 891.0,270.4 889.5,278.3 873.6,278.3" fill="#5f6470" /><polygon points="1306.0,270.4 1289.0,270.4 1290.5,278.3 1306.4,278.3" fill="#5f6470" /><rect x="1077.0" y="278.0" width="12.3" height="268.0" fill="#c3c9d6" /><rect x="1080.5" y="278.0" width="2.0" height="268.0" fill="#d6dbe5" /><rect x="1084.5" y="278.0" width="1.3" height="268.0" fill="#b3b9c7" /><rect x="1079.0" y="397.6" width="8.3" height="53.5" fill="#8f95a3" /><rect x="1079.0" y="397.6" width="1.6" height="53.5" fill="#a9aebb" /><rect x="1077.0" y="274.5" width="12.3" height="4.0" fill="#5f6470" /><rect x="1077.0" y="545.7" width="12.3" height="20.0" fill="#6a7183" /><rect x="1090.7" y="278.0" width="12.3" height="268.0" fill="#c3c9d6" /><rect x="1094.2" y="278.0" width="2.0" height="268.0" fill="#d6dbe5" /><rect x="1098.2" y="278.0" width="1.3" height="268.0" fill="#b3b9c7" /><rect x="1092.7" y="397.6" width="8.3" height="53.5" fill="#8f95a3" /><rect x="1092.7" y="397.6" width="1.6" height="53.5" fill="#a9aebb" /><rect x="1090.7" y="274.5" width="12.3" height="4.0" fill="#5f6470" /><rect x="1090.7" y="545.7" width="12.3" height="20.0" fill="#6a7183" /><rect x="1089.2" y="278.0" width="1.6" height="288.0" fill="#d3d8e2" /><rect x="1079.5" y="565.7" width="21.0" height="113.0" fill="#d8dce6" /><rect x="1089.3" y="565.7" width="1.4" height="113.0" fill="#b9bfcc" /><rect x="1083.0" y="565.7" width="1.0" height="113.0" fill="#dde1ea" /><rect x="1096.0" y="565.7" width="1.0" height="113.0" fill="#dde1ea" /><circle cx="1090" cy="435.700" r="6" fill="none" stroke="#fff" stroke-width="2"/><circle cx="1090" cy="435.700" r="1.500" fill="#6aa0f0"/><rect x="1079.0" y="678.5" width="32.0" height="9.0" fill="#d0d5e0" /><rect x="922.5" y="687.0" width="16.0" height="11.0" fill="#c6cbd6" /><rect x="925.0" y="697" width="11" height="15.500" rx="3.500" fill="#0b0b0b"/><rect x="1072.5" y="687.0" width="16.0" height="11.0" fill="#c6cbd6" /><rect x="1075.0" y="697" width="11" height="15.500" rx="3.500" fill="#0b0b0b"/><rect x="1092.8" y="687.0" width="16.0" height="11.0" fill="#c6cbd6" /><rect x="1095.3" y="697" width="11" height="15.500" rx="3.500" fill="#0b0b0b"/><rect x="1241.5" y="687.0" width="16.0" height="11.0" fill="#c6cbd6" /><rect x="1244.0" y="697" width="11" height="15.500" rx="3.500" fill="#0b0b0b"/><rect x="1090" y="622" width="44" height="24" rx="4" fill="#000"/><text x="1112" y="638.500" text-anchor="middle" font-family="Liberation Sans, sans-serif" font-weight="700" font-size="12" textLength="22.600" fill="#fff">root</text><circle cx="1122.500" cy="748" r="34" fill="url(#ggz)"/><path d="M1101.400 748.400H1122.300" stroke="#9b9b9b" stroke-width="1.200"/><path d="M1122.300 748.400H1143.500" stroke="#d9263a" stroke-width="1.500"/><path d="M1122.300 738V748.400" stroke="#2a6fd6" stroke-width="1.500"/><circle cx="1101.400" cy="748.400" r="4.400" fill="#9b9b9b"/><circle cx="1122.300" cy="757.400" r="4.400" fill="#9b9b9b"/><circle cx="1122.300" cy="766.600" r="4.400" fill="#9b9b9b"/><circle cx="1122.300" cy="729.700" r="6.400" fill="#2a6fd6"/><circle cx="1122.300" cy="738.800" r="6.400" fill="#1f8a1f"/><circle cx="1143.500" cy="748.400" r="6.400" fill="#d9263a"/><text x="1122.300" y="733.300" font-family="Liberation Sans, sans-serif" font-size="10" fill="#fff" text-anchor="middle">Z</text><text x="1122.300" y="742.400" font-family="Liberation Sans, sans-serif" font-size="10" fill="#fff" text-anchor="middle">Y</text><text x="1143.500" y="752" font-family="Liberation Sans, sans-serif" font-size="10" fill="#fff" text-anchor="middle">X</text></svg>
<div class="a" style="left:999.5px;top:80px;width:181px;height:26px;background:#fff;border:1px solid #c9c9c9;border-radius:3px;box-sizing:border-box"></div>
<div class="a" style="left:1041px;top:81px;width:1px;height:24px;background:#cfcfcf"></div>
<div class="a" style="left:1074px;top:81px;width:1px;height:24px;background:#cfcfcf"></div>
<div class="a" style="left:1138.5px;top:81px;width:1px;height:24px;background:#cfcfcf"></div>
<svg class="a" style="left:1002.20px;top:85.00px;" width="16" height="16" viewBox="0 0 24 24"><path d="M19 13h-6v6h-2v-6H5v-2h6V5h2v6h6v2z" fill="#111"/></svg>
<svg class="a" style="left:1022.20px;top:85.30px;" width="16" height="16" viewBox="0 0 24 24"><path d="M7 10l5 5 5-5z" fill="#111"/></svg>
<svg class="a" style="left:1049.40px;top:85.00px;" width="16" height="16" viewBox="0 0 24 24"><circle cx="12" cy="12" r="9" fill="none" stroke="#111" stroke-width="2"/><path d="M7.200 7.200l9.600 9.600M16.800 7.200l-9.600 9.600" stroke="#111" stroke-width="2" fill="none"/></svg>
<svg class="a" style="left:1082.40px;top:85.30px;" width="16" height="16" viewBox="0 0 24 24"><path d="M12 4v9M12 13l-7.5 5M12 13l7.5 5" fill="none" stroke="#111" stroke-width="2" stroke-linecap="butt"/></svg>
<svg class="a" style="left:1114.30px;top:85.00px;" width="16" height="16" viewBox="0 0 24 24"><path d="M21 6H3c-1.1 0-2 .9-2 2v8c0 1.1.9 2 2 2h18c1.1 0 2-.9 2-2V8c0-1.1-.9-2-2-2zm0 10H3V8h2v4h2V8h2v4h2V8h2v4h2V8h2v4h2V8h2v8z" fill="#111"/></svg>
<svg class="a" style="left:1141.30px;top:84.50px;" width="16" height="16" viewBox="0 0 24 24"><path d="M14.12 4l1.83 2H20v12H4V6h4.05l1.83-2h4.24M15 2H9L7.17 4H4c-1.1 0-2 .9-2 2v12c0 1.1.9 2 2 2h16c1.1 0 2-.9 2-2V6c0-1.1-.9-2-2-2h-3.17L15 2zm-3 7c1.65 0 3 1.35 3 3s-1.35 3-3 3-3-1.35-3-3 1.35-3 3-3m0-2c-2.76 0-5 2.24-5 5s2.24 5 5 5 5-2.24 5-5-2.24-5-5-5z" fill="#111"/></svg>
<svg class="a" style="left:1161.30px;top:85.30px;" width="16" height="16" viewBox="0 0 24 24"><path d="M7 10l5 5 5-5z" fill="#111"/></svg>
<div class="a" style="left:1340px;top:72px;width:333px;height:347px;background:#fff"></div>
<div class="a" style="left:1348px;top:80px;width:302px;height:24px;border:1px solid #a9a9a9;border-radius:2px;box-sizing:border-box"></div>
<svg class="a" style="left:1356.30px;top:84.20px;" width="16" height="16" viewBox="0 0 24 24"><path d="M15.5 14h-.79l-.28-.27C15.41 12.59 16 11.11 16 9.5 16 5.91 13.09 3 9.5 3S3 5.91 3 9.5 5.91 16 9.5 16c1.61 0 3.09-.59 4.23-1.57l.27.28v.79l5 4.99L20.49 19l-4.99-5zm-6 0C7.01 14 5 11.99 5 9.5S7.01 5 9.5 5 14 7.01 14 9.5 11.99 14 9.5 14z" fill="#111"/></svg>
<div class="t" style="left:1380.20px;top:85.0px;letter-spacing:-0.370px;font-family:'Liberation Mono',monospace;color:#8a8a8a;">Search</div>
<svg class="a" style="left:1625.00px;top:84.00px;" width="16" height="16" viewBox="0 0 24 24"><path d="M19 6.41L17.59 5 12 10.59 6.41 5 5 6.41 10.59 12 5 17.59 6.41 19 12 13.41 17.59 19 19 17.59 13.41 12z" fill="#111"/></svg>
<div class="a" style="left:1662px;top:75px;width:8px;height:257px;background:#c1c1c1;border-radius:4px"></div>
<div class="a" style="left:1340px;top:112px;width:318px;height:32px;background:#f0edfc"></div>
<svg class="a" style="left:1364.40px;top:121.20px;" width="14" height="14" viewBox="0 0 24 24"><path d="M7 10l5 5 5-5z" fill="#111"/></svg>
<svg class="a" style="left:1389.10px;top:121.50px;" width="13" height="13" viewBox="0 0 24 24"><path d="M11.99 2C6.47 2 2 6.48 2 12s4.47 10 9.99 10C17.52 22 22 17.52 22 12S17.52 2 11.99 2zm6.93 6h-2.95c-.32-1.25-.78-2.45-1.38-3.56 1.84.63 3.37 1.91 4.33 3.56zM12 4.04c.83 1.2 1.48 2.53 1.91 3.96h-3.82c.43-1.43 1.08-2.76 1.91-3.96zM4.26 14C4.1 13.36 4 12.69 4 12s.1-1.36.26-2h3.38c-.08.66-.14 1.32-.14 2 0 .68.06 1.34.14 2H4.26zm.82 2h2.95c.32 1.25.78 2.45 1.38 3.56-1.84-.63-3.37-1.9-4.33-3.56zm2.95-8H5.08c.96-1.66 2.49-2.93 4.33-3.56C8.81 5.55 8.35 6.75 8.03 8zM12 19.96c-.83-1.2-1.48-2.53-1.91-3.96h3.82c-.43 1.43-1.08 2.76-1.91 3.96zM14.34 14H9.66c-.09-.66-.16-1.32-.16-2 0-.68.07-1.35.16-2h4.68c.09.65.16 1.32.16 2 0 .68-.07 1.34-.16 2zm.25 5.56c.6-1.11 1.06-2.31 1.38-3.56h2.95c-.96 1.65-2.49 2.93-4.33 3.56zM16.36 14c.08-.66.14-1.32.14-2 0-.68-.06-1.34-.14-2h3.38c.16.64.26 1.31.26 2s-.1 1.36-.26 2h-3.38z" fill="#111"/></svg>
<div class="t" style="left:1411.15px;top:120.0px;letter-spacing:0.012px;">Scene</div>
<svg class="a" style="left:1413.60px;top:154.00px;" width="12" height="12" viewBox="0 0 24 24"><path d="M12 2.8l8 4.6v9.2l-8 4.6-8-4.6V7.400z M4.300 7.600L12 12l7.700-4.400M12 12v9" fill="none" stroke="#111" stroke-width="1.900" stroke-linejoin="round"/></svg>
<div class="t" style="left:1434.90px;top:152.0px;letter-spacing:0.122px;">building_block_tray</div>
<svg class="a" style="left:1413.60px;top:186.00px;" width="12" height="12" viewBox="0 0 24 24"><path d="M12 2.8l8 4.6v9.2l-8 4.6-8-4.6V7.400z M4.300 7.600L12 12l7.700-4.400M12 12v9" fill="none" stroke="#111" stroke-width="1.900" stroke-linejoin="round"/></svg>
<div class="t" style="left:1434.90px;top:184.0px;letter-spacing:0.246px;">building_block0</div>
<svg class="a" style="left:1413.60px;top:218.00px;" width="12" height="12" viewBox="0 0 24 24"><path d="M12 2.8l8 4.6v9.2l-8 4.6-8-4.6V7.400z M4.300 7.600L12 12l7.700-4.400M12 12v9" fill="none" stroke="#111" stroke-width="1.900" stroke-linejoin="round"/></svg>
<div class="t" style="left:1435.20px;top:216.0px;letter-spacing:0.062px;">enclosure</div>
<svg class="a" style="left:1389.80px;top:218.20px;" width="12" height="12" viewBox="0 0 24 24"><path d="M10 17l5-5-5-5v10z" fill="#111"/></svg>
<svg class="a" style="left:1413.60px;top:250.00px;" width="12" height="12" viewBox="0 0 24 24"><path d="M12 2.8l8 4.6v9.2l-8 4.6-8-4.6V7.400z M4.300 7.600L12 12l7.700-4.400M12 12v9" fill="none" stroke="#111" stroke-width="1.900" stroke-linejoin="round"/></svg>
<div class="t" style="left:1434.90px;top:248.0px;letter-spacing:0.212px;">mdf_board</div>
<svg class="a" style="left:1413.60px;top:282.00px;" width="12" height="12" viewBox="0 0 24 24"><path d="M12 2.8l8 4.6v9.2l-8 4.6-8-4.6V7.400z M4.300 7.600L12 12l7.700-4.400M12 12v9" fill="none" stroke="#111" stroke-width="1.900" stroke-linejoin="round"/></svg>
<div class="t" style="left:1434.90px;top:280.0px;letter-spacing:0.012px;">ur5e_base</div>
<svg class="a" style="left:1413.10px;top:313.50px;" width="13" height="13" viewBox="0 0 24 24"><path d="M15 8v8H5V8h10m1-2H4c-.55 0-1 .45-1 1v10c0 .55.45 1 1 1h12c.55 0 1-.45 1-1v-3.5l4 4v-11l-4 4V7c0-.55-.45-1-1-1z" fill="#111"/></svg>
<div class="t" style="left:1435.70px;top:312.0px;letter-spacing:-0.036px;">workcell_camera</div>
<svg class="a" style="left:1389.80px;top:314.20px;" width="12" height="12" viewBox="0 0 24 24"><path d="M10 17l5-5-5-5v10z" fill="#111"/></svg>
<svg class="a" style="left:1413.60px;top:346.00px;" width="12" height="12" viewBox="0 0 24 24"><path d="M12 4v9M12 13l-7.5 5M12 13l7.5 5" fill="none" stroke="#111" stroke-width="2" stroke-linecap="butt"/></svg>
<div class="t" style="left:1435.55px;top:344.0px;letter-spacing:0.095px;">floor_origin</div>
<svg class="a" style="left:1413.60px;top:378.00px;" width="12" height="12" viewBox="0 0 24 24"><path d="M12 4v9M12 13l-7.5 5M12 13l7.5 5" fill="none" stroke="#111" stroke-width="2" stroke-linecap="butt"/></svg>
<div class="t" style="left:1435.20px;top:376.0px;letter-spacing:-0.025px;">grasp_frame</div>
<svg class="a" style="left:1503.40px;top:344.00px;" width="16" height="16" viewBox="0 0 24 24"><path d="M11.99 2C6.47 2 2 6.48 2 12s4.47 10 9.99 10C17.52 22 22 17.52 22 12S17.52 2 11.99 2zm6.93 6h-2.95c-.32-1.25-.78-2.45-1.38-3.56 1.84.63 3.37 1.91 4.33 3.56zM12 4.04c.83 1.2 1.48 2.53 1.91 3.96h-3.82c.43-1.43 1.08-2.76 1.91-3.96zM4.26 14C4.1 13.36 4 12.69 4 12s.1-1.36.26-2h3.38c-.08.66-.14 1.32-.14 2 0 .68.06 1.34.14 2H4.26zm.82 2h2.95c.32 1.25.78 2.45 1.38 3.56-1.84-.63-3.37-1.9-4.33-3.56zm2.95-8H5.08c.96-1.66 2.49-2.93 4.33-3.56C8.81 5.55 8.35 6.75 8.03 8zM12 19.96c-.83-1.2-1.48-2.53-1.91-3.96h3.82c-.43 1.43-1.08 2.76-1.91 3.96zM14.34 14H9.66c-.09-.66-.16-1.32-.16-2 0-.68.07-1.35.16-2h4.68c.09.65.16 1.32.16 2 0 .68-.07 1.34-.16 2zm.25 5.56c.6-1.11 1.06-2.31 1.38-3.56h2.95c-.96 1.65-2.49 2.93-4.33 3.56zM16.36 14c.08-.66.14-1.32.14-2 0-.68-.06-1.34-.14-2h3.38c.16.64.26 1.31.26 2s-.1 1.36-.26 2h-3.38z" fill="#5c30e0"/></svg>
<svg class="a" style="left:1509.60px;top:376.00px;" width="16" height="16" viewBox="0 0 24 24"><path d="M11.99 2C6.47 2 2 6.48 2 12s4.47 10 9.99 10C17.52 22 22 17.52 22 12S17.52 2 11.99 2zm6.93 6h-2.95c-.32-1.25-.78-2.45-1.38-3.56 1.84.63 3.37 1.91 4.33 3.56zM12 4.04c.83 1.2 1.48 2.53 1.91 3.96h-3.82c.43-1.43 1.08-2.76 1.91-3.96zM4.26 14C4.1 13.36 4 12.69 4 12s.1-1.36.26-2h3.38c-.08.66-.14 1.32-.14 2 0 .68.06 1.34.14 2H4.26zm.82 2h2.95c.32 1.25.78 2.45 1.38 3.56-1.84-.63-3.37-1.9-4.33-3.56zm2.95-8H5.08c.96-1.66 2.49-2.93 4.33-3.56C8.81 5.55 8.35 6.75 8.03 8zM12 19.96c-.83-1.2-1.48-2.53-1.91-3.96h3.82c-.43 1.43-1.08 2.76-1.91 3.96zM14.34 14H9.66c-.09-.66-.16-1.32-.16-2 0-.68.07-1.35.16-2h4.68c.09.65.16 1.32.16 2 0 .68-.07 1.34-.16 2zm.25 5.56c.6-1.11 1.06-2.31 1.38-3.56h2.95c-.96 1.65-2.49 2.93-4.33 3.56zM16.36 14c.08-.66.14-1.32.14-2 0-.68-.06-1.34-.14-2h3.38c.16.64.26 1.31.26 2s-.1 1.36-.26 2h-3.38z" fill="#5c30e0"/></svg>
<div class="a" style="left:1340px;top:405px;width:320px;height:14px;overflow:hidden">
<svg class="a" style="left:73.60px;top:5.00px;" width="12" height="12" viewBox="0 0 24 24"><path d="M12 4v9M12 13l-7.5 5M12 13l7.5 5" fill="none" stroke="#111" stroke-width="2" stroke-linecap="butt"/></svg>
<div class="t" style="left:94.90px;top:3.0px;letter-spacing:0.008px;">pregrasp_frame</div>
<svg class="a" style="left:187.20px;top:3.00px;" width="16" height="16" viewBox="0 0 24 24"><path d="M11.99 2C6.47 2 2 6.48 2 12s4.47 10 9.99 10C17.52 22 22 17.52 22 12S17.52 2 11.99 2zm6.93 6h-2.95c-.32-1.25-.78-2.45-1.38-3.56 1.84.63 3.37 1.91 4.33 3.56zM12 4.04c.83 1.2 1.48 2.53 1.91 3.96h-3.82c.43-1.43 1.08-2.76 1.91-3.96zM4.26 14C4.1 13.36 4 12.69 4 12s.1-1.36.26-2h3.38c-.08.66-.14 1.32-.14 2 0 .68.06 1.34.14 2H4.26zm.82 2h2.95c.32 1.25.78 2.45 1.38 3.56-1.84-.63-3.37-1.9-4.33-3.56zm2.95-8H5.08c.96-1.66 2.49-2.93 4.33-3.56C8.81 5.55 8.35 6.75 8.03 8zM12 19.96c-.83-1.2-1.48-2.53-1.91-3.96h3.82c-.43 1.43-1.08 2.76-1.91 3.96zM14.34 14H9.66c-.09-.66-.16-1.32-.16-2 0-.68.07-1.35.16-2h4.68c.09.65.16 1.32.16 2 0 .68-.07 1.34-.16 2zm.25 5.56c.6-1.11 1.06-2.31 1.38-3.56h2.95c-.96 1.65-2.49 2.93-4.33 3.56zM16.36 14c.08-.66.14-1.32.14-2 0-.68-.06-1.34-.14-2h3.38c.16.64.26 1.31.26 2s-.1 1.36-.26 2h-3.38z" fill="#5c30e0"/></svg>
</div>
<div class="a" style="left:1340px;top:419px;width:333px;height:2px;background:#b9b9b9"></div>
<div class="a" style="left:1498px;top:419px;width:16px;height:2px;background:#8a8a8a"></div>
<div class="a" style="left:1340px;top:421px;width:333px;height:32px;background:#eeeeee"></div>
<svg class="a" style="left:1347.50px;top:429.00px;" width="16" height="16" viewBox="0 0 24 24"><path d="M16.66 4.52l2.83 2.83-2.83 2.83-2.83-2.83 2.83-2.83M9 5v4H5V5h4m10 10v4h-4v-4h4M9 15v4H5v-4h4m7.66-13.31L11 7.34 16.66 13l5.66-5.66-5.66-5.65zM11 3H3v8h8V3zm10 10h-8v8h8v-8zm-10 0H3v8h8v-8z" fill="#111"/></svg>
<div class="t" style="left:1371.20px;top:429.0px;letter-spacing:-0.240px;font-weight:700;">Installed assets</div>
<svg class="a" style="left:1645.00px;top:429.00px;" width="16" height="16" viewBox="0 0 24 24"><path d="M16.59 8.59L12 13.17 7.41 8.59 6 10l6 6 6-6z" fill="#111"/></svg>
<div class="a" style="left:1662px;top:456px;width:8px;height:330px;background:#c1c1c1;border-radius:4px"></div>
<div class="a" style="left:1348px;top:461px;width:122px;height:24px;border:1px solid #d6cbf7;border-radius:2px;box-sizing:border-box"></div>
<svg class="a" style="left:1376.70px;top:465.00px;" width="16" height="16" viewBox="0 0 24 24"><path d="M17.65 6.35C16.2 4.9 14.21 4 12 4c-4.42 0-7.99 3.58-7.99 8s3.57 8 7.99 8c3.73 0 6.84-2.55 7.73-6h-2.08c-.82 2.33-3.04 4-5.65 4-3.31 0-6-2.69-6-6s2.69-6 6-6c1.66 0 3.14.69 4.22 1.78L13 11h7V4l-2.35 2.35z" fill="#5c30e0"/></svg>
<div class="t" style="left:1400.00px;top:465.0px;letter-spacing:-0.025px;color:#5c30e0;">Refresh</div>
<div class="a" style="left:1478px;top:461px;width:172px;height:24px;background:#e4dafb;border-radius:2px"></div>
<svg class="a" style="left:1486.40px;top:465.00px;" width="16" height="16" viewBox="0 0 24 24"><path d="M19 13h-6v6h-2v-6H5v-2h6V5h2v6h6v2z" fill="#2a1363"/></svg>
<div class="t" style="left:1509.50px;top:465.0px;letter-spacing:0.014px;color:#2a1363;">Install asset from catalog</div>
<div class="a" style="left:1356px;top:505px;width:294px;height:34px;border:1px solid #bdbdbd;box-sizing:border-box;background:#fff"></div>
<svg class="a" style="left:1365.00px;top:514.00px;" width="16" height="16" viewBox="0 0 24 24"><path d="M9.17 6l2 2H20v10H4V6h5.17M10 4H4c-1.1 0-1.99.9-1.99 2L2 18c0 1.1.9 2 2 2h16c1.1 0 2-.9 2-2V8c0-1.1-.9-2-2-2h-8l-2-2z" fill="#111"/></svg>
<div class="t" style="left:1387.90px;top:514.0px;letter-spacing:-0.093px;font-weight:700;">HardwareDevices</div>
<svg class="a" style="left:1625.00px;top:514.00px;" width="16" height="16" viewBox="0 0 24 24"><path d="M10 6L8.59 7.41 13.17 12l-4.58 4.59L10 18l6-6z" fill="#111"/></svg>
<div class="a" style="left:1356px;top:547px;width:294px;height:34px;border:1px solid #bdbdbd;box-sizing:border-box;background:#fff"></div>
<svg class="a" style="left:1365.00px;top:556.00px;" width="16" height="16" viewBox="0 0 24 24"><path d="M9.17 6l2 2H20v10H4V6h5.17M10 4H4c-1.1 0-1.99.9-1.99 2L2 18c0 1.1.9 2 2 2h16c1.1 0 2-.9 2-2V8c0-1.1-.9-2-2-2h-8l-2-2z" fill="#111"/></svg>
<div class="t" style="left:1388.35px;top:556.0px;letter-spacing:-0.350px;font-weight:700;">Skills</div>
<svg class="a" style="left:1625.00px;top:556.00px;" width="16" height="16" viewBox="0 0 24 24"><path d="M10 6L8.59 7.41 13.17 12l-4.58 4.59L10 18l6-6z" fill="#111"/></svg>
<div class="a" style="left:1356px;top:589px;width:294px;height:34px;border:1px solid #bdbdbd;box-sizing:border-box;background:#fff"></div>
<svg class="a" style="left:1365.00px;top:598.00px;" width="16" height="16" viewBox="0 0 24 24"><path d="M9.17 6l2 2H20v10H4V6h5.17M10 4H4c-1.1 0-1.99.9-1.99 2L2 18c0 1.1.9 2 2 2h16c1.1 0 2-.9 2-2V8c0-1.1-.9-2-2-2h-8l-2-2z" fill="#111"/></svg>
<div class="t" style="left:1388.35px;top:598.0px;letter-spacing:-0.095px;font-weight:700;">SceneObjects</div>
<svg class="a" style="left:1625.00px;top:598.00px;" width="16" height="16" viewBox="0 0 24 24"><path d="M10 6L8.59 7.41 13.17 12l-4.58 4.59L10 18l6-6z" fill="#111"/></svg>
<div class="a" style="left:1356px;top:631px;width:294px;height:34px;border:1px solid #bdbdbd;box-sizing:border-box;background:#fff"></div>
<svg class="a" style="left:1365.00px;top:640.00px;" width="16" height="16" viewBox="0 0 24 24"><path d="M9.17 6l2 2H20v10H4V6h5.17M10 4H4c-1.1 0-1.99.9-1.99 2L2 18c0 1.1.9 2 2 2h16c1.1 0 2-.9 2-2V8c0-1.1-.9-2-2-2h-8l-2-2z" fill="#111"/></svg>
<div class="t" style="left:1387.90px;top:640.0px;letter-spacing:-0.067px;font-weight:700;">Data</div>
<svg class="a" style="left:1625.00px;top:640.00px;" width="16" height="16" viewBox="0 0 24 24"><path d="M10 6L8.59 7.41 13.17 12l-4.58 4.59L10 18l6-6z" fill="#111"/></svg>
<div class="a" style="left:1356px;top:673px;width:294px;height:34px;border:1px solid #bdbdbd;box-sizing:border-box;background:#fff"></div>
<svg class="a" style="left:1365.00px;top:682.00px;" width="16" height="16" viewBox="0 0 24 24"><path d="M9.17 6l2 2H20v10H4V6h5.17M10 4H4c-1.1 0-1.99.9-1.99 2L2 18c0 1.1.9 2 2 2h16c1.1 0 2-.9 2-2V8c0-1.1-.9-2-2-2h-8l-2-2z" fill="#111"/></svg>
<div class="t" style="left:1388.35px;top:682.0px;letter-spacing:-0.207px;font-weight:700;">Services</div>
<svg class="a" style="left:1625.00px;top:682.00px;" width="16" height="16" viewBox="0 0 24 24"><path d="M10 6L8.59 7.41 13.17 12l-4.58 4.59L10 18l6-6z" fill="#111"/></svg>
<div class="a" style="left:1356px;top:715px;width:294px;height:34px;border:1px solid #bdbdbd;box-sizing:border-box;background:#fff"></div>
<svg class="a" style="left:1365.00px;top:724.00px;" width="16" height="16" viewBox="0 0 24 24"><path d="M9.17 6l2 2H20v10H4V6h5.17M10 4H4c-1.1 0-1.99.9-1.99 2L2 18c0 1.1.9 2 2 2h16c1.1 0 2-.9 2-2V8c0-1.1-.9-2-2-2h-8l-2-2z" fill="#111"/></svg>
<div class="t" style="left:1387.90px;top:724.0px;letter-spacing:-0.288px;font-weight:700;">Processes</div>
<svg class="a" style="left:1625.00px;top:724.00px;" width="16" height="16" viewBox="0 0 24 24"><path d="M10 6L8.59 7.41 13.17 12l-4.58 4.59L10 18l6-6z" fill="#111"/></svg>
<div class="a" style="left:1356px;top:757px;width:294px;height:34px;border:1px solid #bdbdbd;box-sizing:border-box;background:#fff"></div>
<svg class="a" style="left:1365.00px;top:766.00px;" width="16" height="16" viewBox="0 0 24 24"><path d="M9.17 6l2 2H20v10H4V6h5.17M10 4H4c-1.1 0-1.99.9-1.99 2L2 18c0 1.1.9 2 2 2h16c1.1 0 2-.9 2-2V8c0-1.1-.9-2-2-2h-8l-2-2z" fill="#111"/></svg>
<div class="t" style="left:1387.90px;top:766.0px;letter-spacing:-0.150px;font-weight:700;">Products</div>
<svg class="a" style="left:1625.00px;top:766.00px;" width="16" height="16" viewBox="0 0 24 24"><path d="M10 6L8.59 7.41 13.17 12l-4.58 4.59L10 18l6-6z" fill="#111"/></svg>
<div class="a" style="left:829px;top:800px;width:16px;height:2px;background:#757575"></div>
<div class="a" style="left:0px;top:802px;width:1673px;height:32px;background:#eeeeee"></div>
<div class="t" style="left:7.85px;top:809.5px;letter-spacing:0.560px;color:#5c30e0;-webkit-text-stroke:0.300px #5c30e0;">Output</div>
<div class="a" style="left:0px;top:832px;width:55px;height:2px;background:#5c30e0"></div>
<div class="t" style="left:62.85px;top:810.0px;letter-spacing:-0.044px;">Variables</div>
<svg class="a" style="left:1645.00px;top:810.00px;" width="16" height="16" viewBox="0 0 24 24"><path d="M16.59 8.59L12 13.17 7.41 8.59 6 10l6 6 6-6z" fill="#111"/></svg>
<div class="a" style="left:0px;top:866px;width:1673px;height:1px;background:#bdbdbd"></div>
<div class="a" style="left:271px;top:834px;width:2px;height:221px;background:#b9b9b9"></div>
<div class="a" style="left:690.5px;top:834px;width:2px;height:221px;background:#b9b9b9"></div>
<div class="a" style="left:271px;top:937px;width:2px;height:16px;background:#6e6e6e"></div>
<div class="a" style="left:690.5px;top:937px;width:2px;height:16px;background:#6e6e6e"></div>
<div class="t" style="left:7.90px;top:842.0px;letter-spacing:-0.375px;font-weight:700;">Current Run</div>
<div class="t" style="left:7.40px;top:875.0px;letter-spacing:0.096px;color:#707070;">No current run.</div>
<div class="t" style="left:280.55px;top:842.0px;letter-spacing:-0.321px;font-weight:700;">Sequence List</div>
<div class="t" style="left:279.90px;top:875.0px;letter-spacing:0.118px;color:#707070;">No current run.</div>
<div class="t" style="left:698.60px;top:842.0px;letter-spacing:-0.310px;font-weight:700;">Errors</div>
<div class="t" style="left:698.40px;top:875.0px;letter-spacing:0.139px;color:#707070;">No current run.</div>
<svg class="a" style="left:0;top:0" width="1673" height="1055" viewBox="0 0 1673 1055"><g fill="none" stroke="#ff3a0c" stroke-width="3" stroke-linecap="round" stroke-linejoin="round"><path d="M280.200 69.500L266.600 31"/><path d="M261.800 46.500L266.600 31 280.500 41"/><path d="M743 490L702 455.500"/><path d="M719.500 456.800L702 455.500 707.300 470"/></g></svg>
</div></body></html>
